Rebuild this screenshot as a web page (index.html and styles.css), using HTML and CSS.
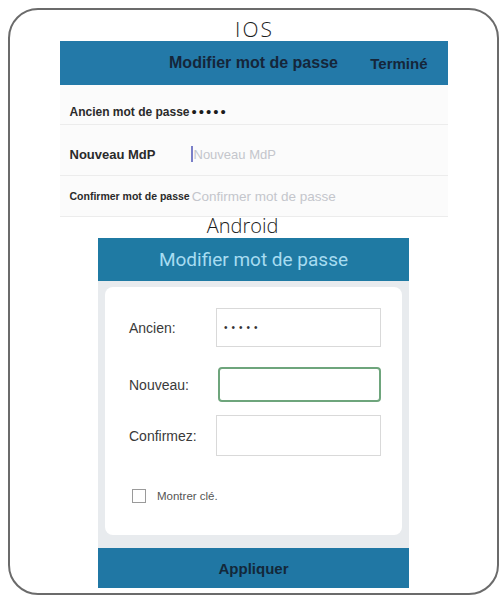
FILE: index.html
```html
<!DOCTYPE html>
<html lang="fr">
<head>
<meta charset="utf-8">
<title>Modifier mot de passe</title>
<link rel="stylesheet" href="styles.css">
</head>
<body>
<div class="frame">
  <div class="os-label os-ios">IOS</div>
  <section class="ios">
    <div class="ios-bar">
      <span></span>
      <span class="ios-title">Modifier mot de passe</span>
      <span class="ios-done">Terminé</span>
    </div>
    <div class="ios-form">
      <div class="ios-row row1"><span class="ios-lbl">Ancien mot de passe</span><span class="ios-dots">•••••</span></div>
      <div class="ios-row row2"><span class="ios-lbl big">Nouveau MdP</span><span class="caret"></span><span class="ph">Nouveau MdP</span></div>
      <div class="ios-row row3"><span class="ios-lbl small">Confirmer mot de passe</span><span class="ph ph2">Confirmer mot de passe</span></div>
    </div>
  </section>
  <div class="os-label os-android">Android</div>
  <section class="android">
    <div class="and-bar">Modifier mot de passe</div>
    <div class="and-body">
      <div class="card">
        <div class="field f1"><span class="flbl">Ancien:</span><div class="inp">•••••</div></div>
        <div class="field f2"><span class="flbl">Nouveau:</span><div class="inp focus"></div></div>
        <div class="field f3"><span class="flbl">Confirmez:</span><div class="inp"></div></div>
        <div class="check"><span class="box"></span><span class="clbl">Montrer clé.</span></div>
      </div>
    </div>
    <div class="and-apply">Appliquer</div>
  </section>
</div>
</body>
</html>
```
FILE: styles.css
```css
html, body { margin: 0; padding: 0; background: #ffffff; }
body { font-family: "Liberation Sans", Arial, sans-serif; }

.frame {
  margin: 8px;
  width: 491px;
  height: 587px;
  box-sizing: border-box;
  border: 2px solid #6b6b6b;
  border-radius: 30px;
  display: flex;
  flex-direction: column;
  align-items: center;
  overflow: hidden;
}

.os-label {
  font-family: "Open Sans", "Liberation Sans", sans-serif;
  font-weight: 300;
  color: #1c1c1c;
  text-align: center;
}
.os-ios { height: 31px; font-size: 21px; line-height: 38px; letter-spacing: 2px; padding-left: 2px; }
.os-android { height: 21px; font-size: 20px; line-height: 17px; margin-right: 22px; }

.ios { width: 388px; }
.ios-bar {
  height: 44px;
  background: #2379a8;
  display: grid;
  grid-template-columns: 1fr auto 1fr;
  align-items: center;
  color: #15263a;
  font-weight: bold;
  font-size: 15px;
  padding: 0 20px;
}
.ios-title { font-size: 16px; }
.ios-done { justify-self: end; font-size: 15px; }

.ios-form { background: #fbfbfb; }
.ios-row {
  display: flex;
  align-items: center;
  padding-left: 10px;
  border-bottom: 1px solid #ececec;
  box-sizing: border-box;
}
.row1 { height: 40px; padding-top: 14px; }
.row2 { height: 51px; padding-top: 8px; }
.row3 { height: 41px; }
.ios-lbl { font-weight: bold; color: #2a2a2a; font-size: 12px; }
.ios-lbl.big { font-size: 13px; width: 121px; }
.ios-lbl.small { font-size: 10.5px; }
.ios-dots { font-size: 15px; color: #1c1c1c; letter-spacing: 2px; margin-left: 2px; }
.caret { width: 2px; height: 16px; background: #7a7fc8; margin-right: 1px; }
.ph { color: #c4c6cc; font-size: 13px; }
.ph2 { font-size: 13.5px; margin-left: 2px; }

.android { width: 311px; display: flex; flex-direction: column; }
.and-bar {
  height: 43px;
  background: #1f7aa3;
  color: #a7dcf1;
  font-family: Roboto, "Liberation Sans", sans-serif;
  font-size: 19px;
  display: flex;
  align-items: center;
  justify-content: center;
}
.and-body {
  background: #e8ebee;
  padding: 6px 7px 13px 7px;
}
.card {
  height: 248px;
  background: #ffffff;
  border-radius: 8px;
  box-sizing: border-box;
  padding: 21px 0 0 24px;
  display: flex;
  flex-direction: column;
}
.field { display: flex; align-items: center; }
.flbl { width: 87px; font-size: 14px; color: #3a3a3a; }
.inp {
  width: 165px;
  box-sizing: border-box;
  border: 1px solid #d9d9d9;
  padding-left: 7px;
  font-size: 10px;
  letter-spacing: 4px;
  color: #333;
  display: flex;
  align-items: center;
}
.f1 .inp { height: 39px; }
.f2 { margin-top: 20px; }
.f2 .inp { height: 35px; border: 2px solid #6ea57c; border-radius: 4px; width: 163px; margin-left: 2px; }
.f3 { margin-top: 13px; }
.f3 .inp { height: 41px; }
.check { display: flex; align-items: center; margin-top: 33px; padding-left: 3px; }
.box { width: 12px; height: 12px; border: 1px solid #9a9a9a; }
.clbl { margin-left: 11px; font-size: 11.5px; color: #555; }

.and-apply {
  height: 40px;
  background: #2077a4;
  color: #13283a;
  font-weight: bold;
  font-size: 15px;
  display: flex;
  align-items: center;
  justify-content: center;
}
```
